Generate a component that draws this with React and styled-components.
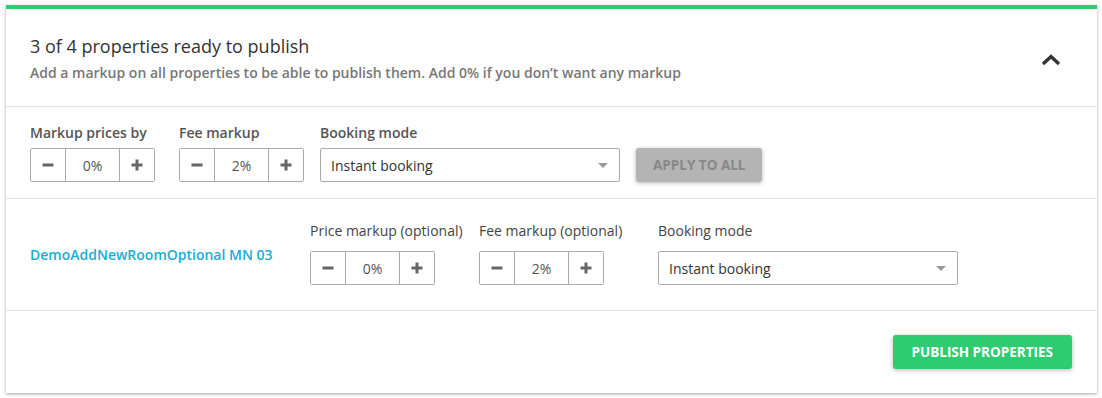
import React from 'react';
import styled, { createGlobalStyle } from 'styled-components';

const GlobalStyle = createGlobalStyle`
    body {
        margin: 0;
        padding: 5px 5px 5px 6px;
        background: #fff;
        font-family: "Open Sans", "Liberation Sans", sans-serif;
    }
`;

const Card = styled.div`
    width: 1091px;
    background: #fff;
    border-top: 4px solid #2ecc71;
    box-shadow: 0 1px 3px rgba(0, 0, 0, 0.35);
`;

const Header = styled.div`
    display: flex;
    align-items: center;
    justify-content: space-between;
    padding: 25px 36px 23px 24px;
    border-bottom: 1px solid #e2e2e2;
`;

const Title = styled.h2`
    margin: 0 0 5px;
    font-size: 18px;
    line-height: 24px;
    font-weight: 400;
    color: #333;
`;

const Subtitle = styled.p`
    margin: 0;
    font-size: 14px;
    line-height: 20px;
    font-weight: 600;
    color: #777;
`;

const Toggle = styled.button`
    border: 0;
    background: none;
    padding: 0;
    margin-top: 2px;
    display: flex;
    cursor: pointer;
`;

const Section = styled.div`
    display: flex;
    align-items: ${(p) => p.$align || 'flex-end'};
    padding: ${(p) => p.$pad};
    border-bottom: 1px solid #e2e2e2;
`;

const Field = styled.div`
    display: flex;
    flex-direction: column;
    width: ${(p) => p.$w}px;
    flex: none;
`;

const Label = styled.label`
    font-size: 14px;
    line-height: 20px;
    font-weight: ${(p) => (p.$light ? 400 : 600)};
    color: ${(p) => (p.$light ? '#444' : '#555')};
    margin-bottom: ${(p) => (p.$light ? 10 : 5)}px;
    white-space: nowrap;
`;

const Stepper = styled.div`
    display: flex;
    width: 125px;
    height: 34px;
    box-sizing: border-box;
    border: 1px solid #ababab;
    border-radius: 2px;
`;

const StepBtn = styled.button`
    width: 35px;
    border: 0;
    ${(p) => (p.$side === 'left' ? 'border-right' : 'border-left')}: 1px solid #ababab;
    background: #fff;
    padding: 0;
    display: flex;
    align-items: center;
    justify-content: center;
    cursor: pointer;
`;

const StepValue = styled.div`
    flex: 1;
    display: flex;
    align-items: center;
    justify-content: center;
    font-size: 14px;
    color: #555;
`;

const Select = styled.div`
    width: 300px;
    height: 34px;
    box-sizing: border-box;
    border: 1px solid #ababab;
    border-radius: 2px;
    display: flex;
    align-items: center;
    justify-content: space-between;
    padding: 0 11px 0 10px;
    font-size: 14px;
    color: #333;
`;

const Caret = styled.span`
    width: 0;
    height: 0;
    border-left: 5px solid transparent;
    border-right: 5px solid transparent;
    border-top: 5px solid #999;
`;

const Button = styled.button`
    height: 34px;
    border: 0;
    border-radius: 3px;
    padding: 0 ${(p) => (p.$primary ? 19 : 17)}px;
    font-family: inherit;
    font-size: 13.5px;
    font-weight: 700;
    background: ${(p) => (p.$primary ? '#2ecc71' : '#b4b4b4')};
    color: ${(p) => (p.$primary ? '#fff' : '#888')};
    box-shadow: 0 1px 4px rgba(0, 0, 0, 0.3);
    cursor: pointer;
`;

const Name = styled.a`
    width: 280px;
    flex: none;
    font-size: 14px;
    font-weight: 600;
    color: #1aaed4;
    text-decoration: none;
    padding-top: 2px;
`;

const Footer = styled.div`
    display: flex;
    justify-content: flex-end;
    padding: 24px 25px 24px;
`;

function Minus() {
    return (
        <svg width="12" height="12" viewBox="0 0 12 12">
            <rect x="0.5" y="4.5" width="11" height="3" fill="#666" />
        </svg>
    );
}

function Plus() {
    return (
        <svg width="12" height="12" viewBox="0 0 12 12">
            <rect x="0.5" y="4.5" width="11" height="3" fill="#666" />
            <rect x="4.5" y="0.5" width="3" height="11" fill="#666" />
        </svg>
    );
}

function NumberStepper({ value }) {
    return (
        <Stepper>
            <StepBtn $side="left"><Minus /></StepBtn>
            <StepValue>{value}</StepValue>
            <StepBtn $side="right"><Plus /></StepBtn>
        </Stepper>
    );
}

function BookingSelect() {
    return (
        <Select>
            <span>Instant booking</span>
            <Caret />
        </Select>
    );
}

export default function App() {
    return (
        <>
            <GlobalStyle />
            <Card>
                <Header>
                    <div>
                        <Title>3 of 4 properties ready to publish</Title>
                        <Subtitle>Add a markup on all properties to be able to publish them. Add 0% if you don’t want any markup</Subtitle>
                    </div>
                    <Toggle>
                        <svg width="20" height="13" viewBox="0 0 20 13">
                            <polyline points="2,11 10,3.5 18,11" fill="none" stroke="#333" strokeWidth="3.4" />
                        </svg>
                    </Toggle>
                </Header>

                <Section $pad="16px 24px 16px">
                    <Field $w={149}>
                        <Label>Markup prices by</Label>
                        <NumberStepper value="0%" />
                    </Field>
                    <Field $w={141}>
                        <Label>Fee markup</Label>
                        <NumberStepper value="2%" />
                    </Field>
                    <Field $w={316}>
                        <Label>Booking mode</Label>
                        <BookingSelect />
                    </Field>
                    <Button>APPLY TO ALL</Button>
                </Section>

                <Section $pad="22px 24px 25px" $align="center">
                    <Name href="#">DemoAddNewRoomOptional MN 03</Name>
                    <Field $w={169}>
                        <Label $light>Price markup (optional)</Label>
                        <NumberStepper value="0%" />
                    </Field>
                    <Field $w={179}>
                        <Label $light>Fee markup (optional)</Label>
                        <NumberStepper value="2%" />
                    </Field>
                    <Field $w={300}>
                        <Label $light>Booking mode</Label>
                        <BookingSelect />
                    </Field>
                </Section>

                <Footer>
                    <Button $primary>PUBLISH PROPERTIES</Button>
                </Footer>
            </Card>
        </>
    );
}
